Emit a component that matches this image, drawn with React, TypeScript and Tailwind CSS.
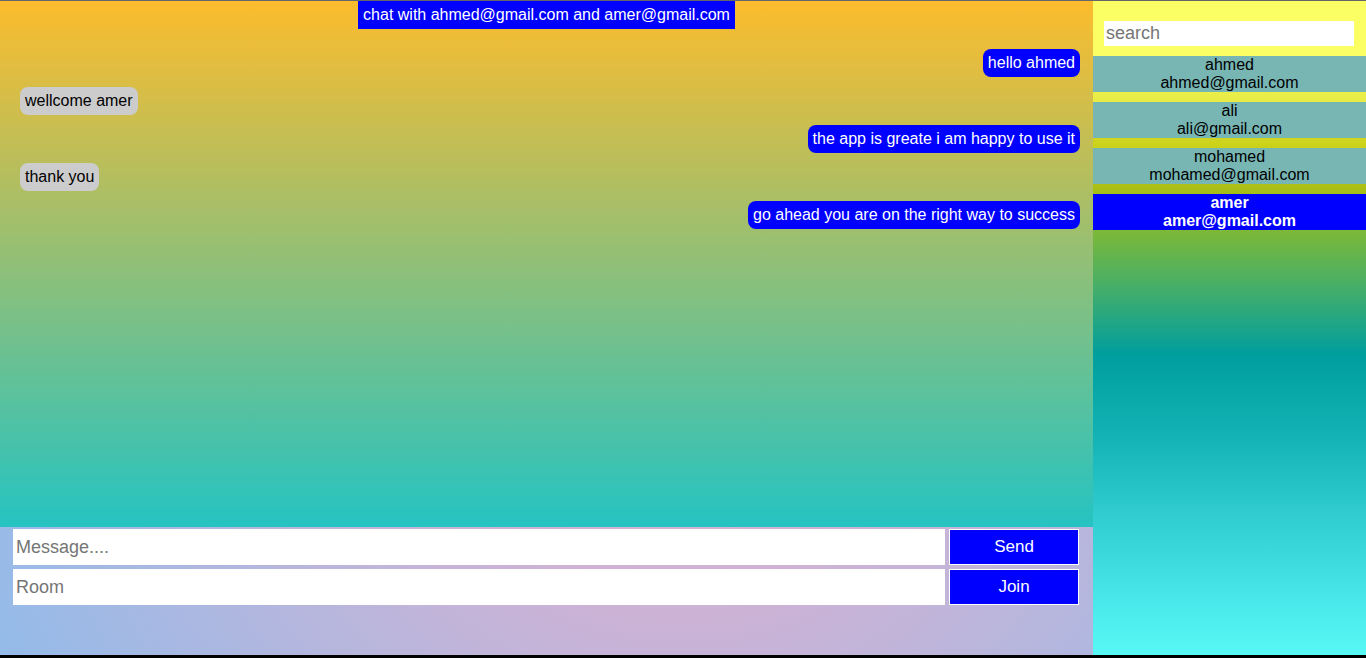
import React from "react";

const messages: { text: string; mine: boolean }[] = [
  { text: "hello ahmed", mine: true },
  { text: "wellcome amer", mine: false },
  { text: "the app is greate i am happy to use it", mine: true },
  { text: "thank you", mine: false },
  { text: "go ahead you are on the right way to success", mine: true },
];

const users = [
  { name: "ahmed", email: "ahmed@gmail.com", active: false },
  { name: "ali", email: "ali@gmail.com", active: false },
  { name: "mohamed", email: "mohamed@gmail.com", active: false },
  { name: "amer", email: "amer@gmail.com", active: true },
];

export default function App() {
  return (
    <div
      className="h-[658px] w-full bg-black overflow-hidden text-[16px] leading-[18px]"
      style={{ fontFamily: '"Liberation Sans", Arial, sans-serif' }}
    >
      <div className="h-[655px] w-full border-t border-[#666666] bg-[radial-gradient(circle,#eeaeca_0%,#94bbe9_100%)] flex">
        {/* main */}
        <div className="w-[1093px] flex flex-col">
          <div className="h-[526px] flex flex-col bg-[linear-gradient(180deg,#fcbc2d_0%,#25c3c2_100%)]">
            <div className="flex justify-center">
              <div className="bg-[#0000ff] text-white px-[5px] py-[5px]">
                chat with ahmed@gmail.com and amer@gmail.com
              </div>
            </div>
            <div className="flex flex-col gap-[10px] pt-[20px] pl-[20px] pr-[13px]">
              {messages.map((m, i) => (
                <div key={i} className={m.mine ? "flex justify-end" : "flex justify-start"}>
                  <div
                    className={
                      m.mine
                        ? "bg-[#0000ff] text-white rounded-[8px] px-[5px] py-[5px]"
                        : "bg-[#cccccc] text-black rounded-[8px] px-[5px] py-[5px]"
                    }
                  >
                    {m.text}
                  </div>
                </div>
              ))}
            </div>
          </div>
          <div className="flex flex-col gap-[4px] pt-[2px] pl-[13px] pr-[14px]">
            <div className="flex gap-[4px]">
              <input
                placeholder="Message...."
                className="flex-1 h-[36px] bg-white px-[3px] text-[18px] placeholder:text-[#757575] outline-none"
                style={{ fontFamily: '"Liberation Sans", Arial, sans-serif' }}
              />
              <button className="w-[130px] h-[36px] bg-[#0000ff] border border-white text-white text-[17px]">
                Send
              </button>
            </div>
            <div className="flex gap-[4px]">
              <input
                placeholder="Room"
                className="flex-1 h-[36px] bg-white px-[3px] text-[18px] placeholder:text-[#757575] outline-none"
                style={{ fontFamily: '"Liberation Sans", Arial, sans-serif' }}
              />
              <button className="w-[130px] h-[36px] bg-[#0000ff] border border-white text-white text-[17px]">
                Join
              </button>
            </div>
          </div>
        </div>
        {/* sidebar */}
        <div className="w-[273px] flex flex-col bg-[linear-gradient(180deg,#fbff63_0%,#f8fb5c_8%,#e9ec45_15%,#ccd21a_22%,#a8be16_29%,#7ab83a_35.5%,#44ae6a_44%,#009e9e_54%,#12b1b3_66%,#2fcbce_78%,#46e4e7_90%,#58f8f6_100%)]">
          <div className="bg-[#fbff63] pt-[20px] pb-[10px] pl-[11px] pr-[12px]">
            <input
              placeholder="search"
              className="w-full h-[25px] bg-white px-[2px] text-[18px] placeholder:text-[#757575] outline-none"
              style={{ fontFamily: '"Liberation Sans", Arial, sans-serif' }}
            />
          </div>
          <div className="flex flex-col gap-[10px]">
            {users.map((u) => (
              <div
                key={u.name}
                className={
                  u.active
                    ? "h-[36px] bg-[#0000ff] text-white font-bold text-center"
                    : "h-[36px] bg-[#78b6b4] text-black text-center"
                }
              >
                <div>{u.name}</div>
                <div>{u.email}</div>
              </div>
            ))}
          </div>
        </div>
      </div>
    </div>
  );
}
